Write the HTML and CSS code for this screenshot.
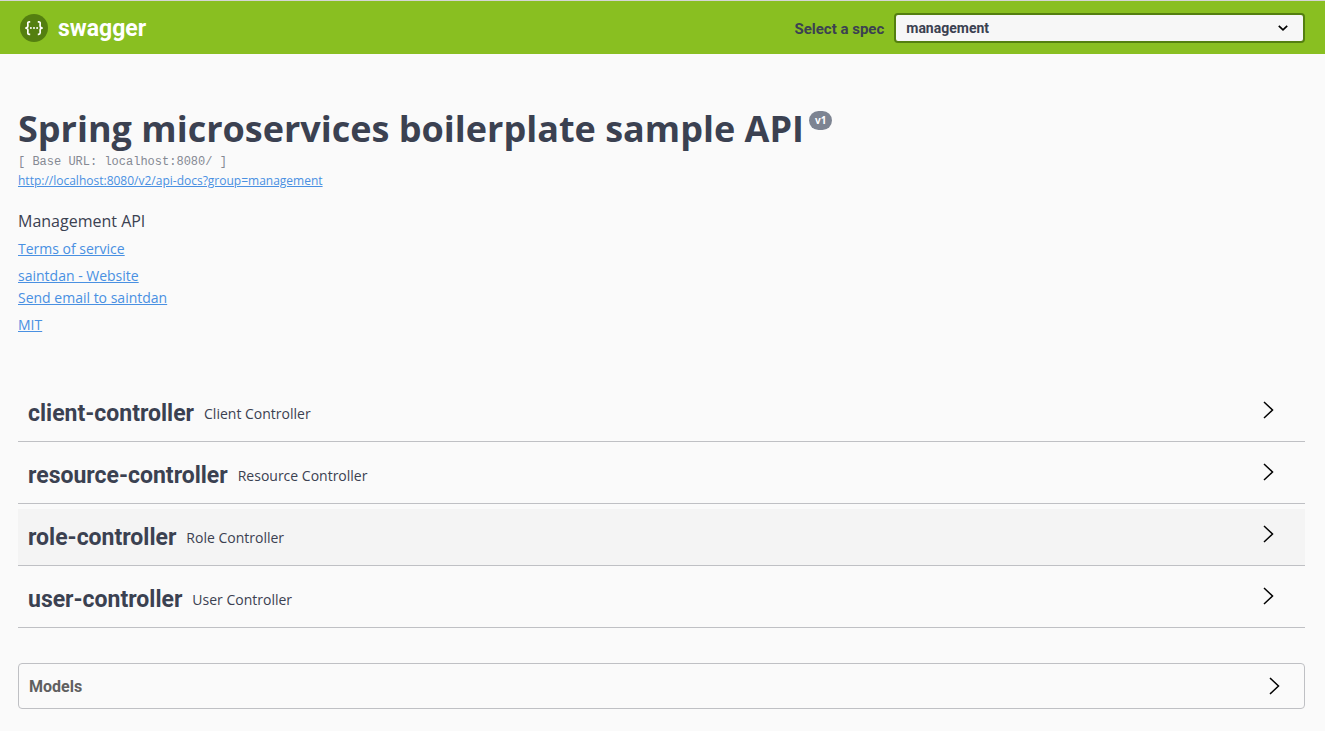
FILE: index.html
```html
<!DOCTYPE html>
<html lang="en">
<head>
<meta charset="utf-8">
<meta name="viewport" content="width=device-width, initial-scale=1">
<title>Swagger UI</title>
<link rel="stylesheet" href="styles.css">
</head>
<body>
<header class="topbar">
  <a class="brand" href="#">
    <svg class="brand-mark" viewBox="0 0 28 28" aria-hidden="true">
      <circle cx="14" cy="14" r="14" fill="#547f10"/>
      <g fill="none" stroke="#fff" stroke-width="1.7" stroke-linejoin="round">
        <path d="M10.2 7.8H9.4C8.1 7.8 7.7 8.5 7.8 9.6L7.9 11.6C7.9 13.2 7.2 14 5.8 14C7.2 14 7.9 14.8 7.9 16.4L7.8 18.6C7.7 19.7 8.1 20.3 9.4 20.3H10.2"/>
        <path d="M17.8 7.8H18.6C19.9 7.8 20.3 8.5 20.2 9.6L20.1 11.6C20.1 13.2 20.8 14 22.2 14C20.8 14 20.1 14.8 20.1 16.4L20.2 18.6C20.1 19.7 19.9 20.3 18.6 20.3H17.8"/>
      </g>
      <g fill="#fff"><circle cx="10.9" cy="14" r="1"/><circle cx="14" cy="14" r="1"/><circle cx="17.1" cy="14" r="1"/></g>
    </svg>
    <span class="brand-name">swagger</span>
  </a>
  <div class="spec">
    <label class="spec-label" for="spec">Select a spec</label>
    <div class="spec-field">
      <select class="spec-select" id="spec"><option>management</option></select>
      <svg class="spec-arrow" viewBox="0 0 10 6" aria-hidden="true"><path d="M.8.8 5 4.8 9.2.8" fill="none" stroke="#000" stroke-width="1.7"/></svg>
    </div>
  </div>
</header>
<main class="page">
  <section class="info">
    <div class="heading">
      <h1 class="title">Spring microservices boilerplate sample API</h1>
      <span class="version">v1</span>
    </div>
    <p class="base-url">[ Base URL: localhost:8080/ ]</p>
    <a class="docs-link" href="#">http://localhost:8080/v2/api-docs?group=management</a>
    <p class="description">Management API</p>
    <div class="links"><a href="#">Terms of service</a></div>
    <div class="links"><a href="#">saintdan - Website</a><a href="#">Send email to saintdan</a></div>
    <div class="links"><a href="#">MIT</a></div>
  </section>
  <section class="tags">
    <button class="tag" type="button"><span class="tag-name">client-controller</span><span class="tag-text">Client Controller</span><svg class="arrow" viewBox="0 0 11 18" aria-hidden="true"><path d="M1 1 9.5 9 1 17"/></svg></button>
    <button class="tag" type="button"><span class="tag-name">resource-controller</span><span class="tag-text">Resource Controller</span><svg class="arrow" viewBox="0 0 11 18" aria-hidden="true"><path d="M1 1 9.5 9 1 17"/></svg></button>
    <button class="tag tag-active" type="button"><span class="tag-name">role-controller</span><span class="tag-text">Role Controller</span><svg class="arrow" viewBox="0 0 11 18" aria-hidden="true"><path d="M1 1 9.5 9 1 17"/></svg></button>
    <button class="tag" type="button"><span class="tag-name">user-controller</span><span class="tag-text">User Controller</span><svg class="arrow" viewBox="0 0 11 18" aria-hidden="true"><path d="M1 1 9.5 9 1 17"/></svg></button>
  </section>
  <button class="models" type="button"><span>Models</span><svg class="arrow" viewBox="0 0 11 18" aria-hidden="true"><path d="M1 1 9.5 9 1 17"/></svg></button>
</main>
</body>
</html>
```
FILE: styles.css
```css
* { box-sizing: border-box; }
body {
  margin: 0;
  background: #fafafa;
  color: #3b4151;
  font-family: "Open Sans", sans-serif;
}
h1, p { margin: 0; }
a { color: #4990e2; }
button { font: inherit; color: inherit; text-align: left; cursor: pointer; }

.topbar {
  display: flex;
  align-items: center;
  justify-content: space-between;
  padding: 12px 20px 11px;
  border-top: 1px solid #d5d5d5;
  background: #89bf21;
  font-family: Roboto, sans-serif;
  font-weight: 700;
}
.brand {
  display: flex;
  align-items: center;
  gap: 10px;
  color: #fff;
  text-decoration: none;
}
.brand-mark { width: 28px; height: 28px; }
.brand-name { padding-top: 2px; font-size: 23px; line-height: 28px; }
.spec { display: flex; align-items: center; gap: 10px; }
.spec-label { padding-top: 2px; font-size: 15px; line-height: 20px; }
.spec-field { position: relative; width: 31vw; }
.spec-select {
  display: block;
  width: 100%;
  height: 30px;
  padding: 0 40px 0 10px;
  appearance: none;
  border: 2px solid #547f10;
  border-radius: 4px;
  background: #f7f7f7;
  color: #3b4151;
  font: 700 14px Roboto, sans-serif;
}
.spec-arrow {
  position: absolute;
  top: 12px;
  right: 17px;
  width: 10px;
  height: 6px;
  pointer-events: none;
}

.page { padding: 50px 20px 22px 18px; }
.heading { display: flex; align-items: flex-start; gap: 5px; }
.title { font-size: 36px; line-height: 49px; font-weight: 700; }
.version {
  margin-top: 7px;
  padding: 0 6px;
  border-radius: 10px;
  background: #7d8492;
  color: #fff;
  font-size: 10px;
  line-height: 19px;
  font-weight: 700;
}
.base-url {
  padding-top: 1px;
  color: #858993;
  font: 12px/16px "Liberation Mono", monospace;
}
.docs-link { display: block; width: fit-content; margin-top: 3px; font-size: 12px; line-height: 16px; }
.description { margin: 20px 0 5px; font-size: 16px; line-height: 24px; }
.links {
  display: flex;
  flex-direction: column;
  align-items: flex-start;
  margin-bottom: 5px;
  font-size: 14px;
  line-height: 22px;
}

.tags { display: grid; gap: 5px; margin-top: 49px; }
.tag {
  display: flex;
  align-items: center;
  gap: 10px;
  width: 100%;
  height: 57px;
  padding: 2px 31px 0 10px;
  border: 0;
  border-bottom: 1px solid #bfc0c4;
  background: transparent;
}
.tag-active { background: #f4f4f4; }
.tag-name { font: 700 23px/32px Roboto, sans-serif; }
.tag-text { font-size: 14px; line-height: 20px; }
.arrow {
  width: 11px;
  height: 18px;
  margin-left: auto;
  fill: none;
  stroke: #000;
  stroke-width: 1.5;
}
.tag .arrow { margin-bottom: 8px; }
.models {
  display: flex;
  align-items: center;
  width: 100%;
  height: 46px;
  margin-top: 35px;
  padding: 0 24px 0 10px;
  border: 1px solid #bfc0c4;
  border-radius: 4px;
  background: transparent;
  color: #606060;
  font: 700 16px/20px Roboto, sans-serif;
}
.models span { padding-top: 2px; }
```
